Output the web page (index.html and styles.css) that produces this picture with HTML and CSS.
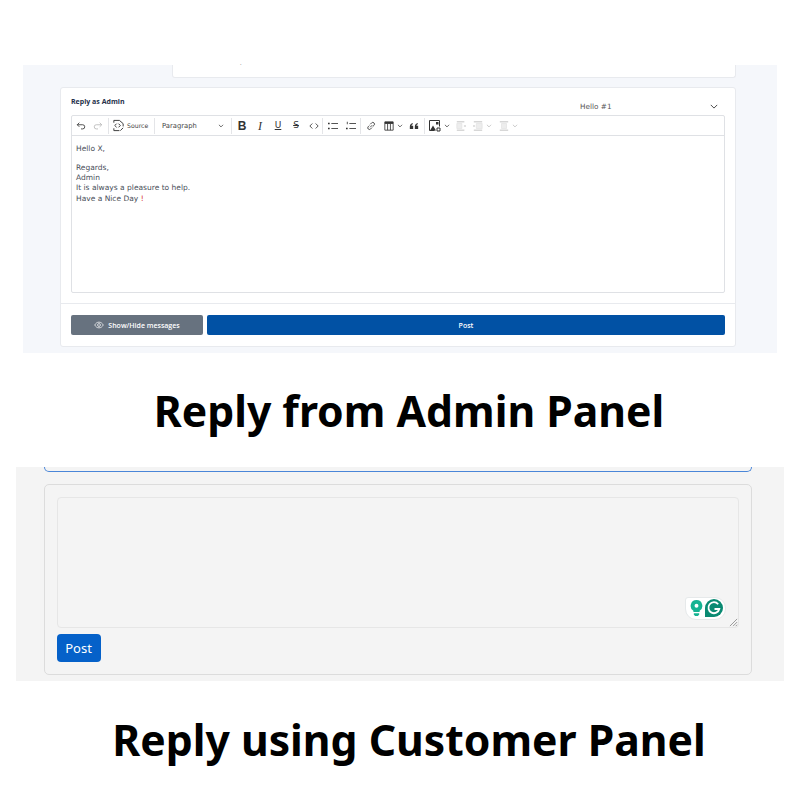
FILE: index.html
```html
<!DOCTYPE html>
<html lang="en">
<head>
    <meta charset="UTF-8">
    <title>Reply from Admin Panel / Customer Panel</title>
    <link rel="stylesheet" href="styles.css">
</head>
<body>

<!-- Admin panel screenshot -->
<section class="admin-panel">
    <div class="prev-message"><span class="prev-dot">.</span></div>

    <div class="reply-card">
        <div class="reply-body">
            <div class="reply-head">
                <span class="reply-title">Reply as Admin</span>
                <div class="template-select">
                    <span>Hello #1</span>
                    <svg class="chev-lg" viewBox="0 0 10 6"><path d="M1 1l4 4 4-4"/></svg>
                </div>
            </div>

            <div class="editor">
                <div class="toolbar">
                    <div class="tool-group history">
                        <svg class="ico" viewBox="0 0 12 12"><path d="M4 2L1.500 4.500 4 7M1.500 4.500H8a2.500 2.500 0 0 1 0 5H6"/></svg>
                        <svg class="ico off" viewBox="0 0 12 12"><path d="M8 2l2.500 2.500L8 7M10.500 4.500H4a2.500 2.500 0 0 0 0 5h2"/></svg>
                    </div>
                    <div class="tool-group source">
                        <svg class="ico ico-src" viewBox="0 0 14 14"><path d="M2 4V1.500h6L12 5v3M2 10v2.500h6M9 12.500l3-3M5 5L3 7l2 2M7 5l2 2-2 2"/></svg>
                        <span class="tool-text">Source</span>
                    </div>
                    <div class="tool-group para">
                        <span class="tool-text para-text">Paragraph</span>
                        <svg class="chev" viewBox="0 0 10 6"><path d="M1.500 1l3.500 3.500L8.500 1"/></svg>
                    </div>
                    <div class="tool-group fmt">
                        <span class="fmt-b">B</span>
                        <span class="fmt-i">I</span>
                        <span class="fmt-u">U</span>
                        <span class="fmt-s">S</span>
                        <svg class="ico" viewBox="0 0 12 12"><path d="M4 3L1 6l3 3M8 3l3 3-3 3"/></svg>
                    </div>
                    <div class="tool-group lists">
                        <svg class="ico" viewBox="0 0 12 12"><path d="M4 3h8M4 9h8"/><path class="dots" d="M0 2h2v2H0zM0 8h2v2H0z"/></svg>
                        <svg class="ico" viewBox="0 0 12 12"><path d="M4 3h8M4 9h8"/><path class="dots" d="M1 1h1v3H1zM0 8h2v2H0z"/></svg>
                    </div>
                    <div class="tool-group insert">
                        <svg class="ico" viewBox="0 0 12 12"><path d="M5 7.500L7.500 5M4 5.500L2.500 7a2 2 0 0 0 2.800 2.800L7 8M5 4l1.700-1.700a2 2 0 0 1 2.900 2.900L8 6.800"/></svg>
                        <svg class="ico ico-table" viewBox="0 0 12 12"><path class="dots" d="M1 1h10v2.500H1z"/><path d="M1 1h10v10H1zM4.300 3v8M7.700 3v8"/></svg>
                        <svg class="chev" viewBox="0 0 10 6"><path d="M1.500 1l3.500 3.500L8.500 1"/></svg>
                        <svg class="ico ico-quote" viewBox="0 0 12 12"><path class="dots" d="M1 6.500C1 4.500 2.500 3 4.500 2.500v1.500C3.500 4.300 3 5 3 5.800h2V9.500H1zM7 6.500C7 4.500 8.500 3 10.500 2.500v1.500C9.500 4.300 9 5 9 5.800h2V9.500H7z"/></svg>
                    </div>
                    <div class="tool-group images">
                        <svg class="ico ico-img" viewBox="0 0 12 12"><path d="M.5.500h10v6"/><path d="M.5.500v10h5"/><path class="dots" d="M1 10.500L4 5.500l3 5zM7 2h2.500v2.500H7z"/><path d="M8 8h3v3H8z"/></svg>
                        <svg class="chev" viewBox="0 0 10 6"><path d="M1.500 1l3.500 3.500L8.500 1"/></svg>
                        <svg class="ico off" viewBox="0 0 12 12"><path class="faint" d="M1 3h6v6H1z"/><path d="M1 1h9M1 11h9M9.500 6H12"/></svg>
                        <svg class="ico off gap-l" viewBox="0 0 12 12"><path class="faint" d="M4 3h7v6H4z"/><path d="M1 1h10M1 11h10M0 6h2.500"/></svg>
                        <svg class="chev off" viewBox="0 0 10 6"><path d="M1.500 1l3.500 3.500L8.500 1"/></svg>
                        <svg class="ico off gap-l" viewBox="0 0 12 12"><path class="faint" d="M3 3h6v6H3z"/><path d="M1 1h10M1 11h10"/></svg>
                        <svg class="chev off" viewBox="0 0 10 6"><path d="M1.500 1l3.500 3.500L8.500 1"/></svg>
                    </div>
                </div>
                <div class="editor-text">
                    <p>Hello X,</p>
                    <p>Regards,<br>Admin<br>It is always a pleasure to help.<br>Have a Nice Day <span class="bang">!</span></p>
                </div>
            </div>
        </div>

        <div class="reply-foot">
            <button class="btn-show">
                <svg class="ico-eye" viewBox="0 0 14 10"><path d="M1 5c1.500-2.600 3.500-4 6-4s4.500 1.400 6 4c-1.500 2.600-3.500 4-6 4S2.500 7.600 1 5z"/><circle cx="7" cy="5" r="2"/></svg>
                Show/Hide messages
            </button>
            <button class="btn-post">Post</button>
        </div>
    </div>
</section>

<h1 class="caption caption-admin">Reply from Admin Panel</h1>

<!-- Customer panel screenshot -->
<section class="customer-panel">
    <div class="prev-box"></div>
    <div class="customer-card">
        <div class="fake-textarea">
            <div class="grammarly">
                <svg class="g-bulb" viewBox="0 0 14 18"><path d="M7 0a6.500 6.500 0 0 1 3.500 12v1.500h-7V12A6.500 6.500 0 0 1 7 0z"/><path d="M4 15h6v1.500L8.500 18h-3L4 16.500z"/><circle class="g-hole" cx="7" cy="6.500" r="2.200"/></svg>
                <svg class="g-logo" viewBox="0 0 18 18"><path class="g-bg" d="M9 0a9 9 0 0 1 0 18H0V9a9 9 0 0 1 9-9z"/><path class="g-mark" d="M13.200 5.200A5.500 5.500 0 1 0 14.300 10H9.500"/></svg>
            </div>
            <svg class="resize-grip" viewBox="0 0 10 10"><path d="M1 9l8-8M4.500 9L9 4.500M7.500 9L9 7.500"/></svg>
        </div>
        <button class="btn-customer">Post</button>
    </div>
</section>

<h1 class="caption caption-customer">Reply using Customer Panel</h1>

</body>
</html>
```

FILE: styles.css
```css
/* General styles */
body {
    font-family: "Open Sans", Arial, sans-serif;
    background-color: #fff;
    margin: 0;
    padding: 65px 0 0;
    height: 735px;
    overflow: hidden;
}

button {
    border: none;
    cursor: pointer;
}

/* Captions */
.caption {
    margin: 0;
    padding-left: 18px;
    font-family: "Noto Sans", sans-serif;
    font-weight: 700;
    font-size: 42.7px;
    line-height: 60px;
    color: #000;
    text-align: center;
}

.caption-admin {
    margin-top: 28px;
    height: 86px;
}

.caption-customer {
    margin-top: 29px;
}

/* Admin panel */
.admin-panel {
    margin: 0 23px;
    height: 288px;
    background-color: #f5f7fb;
    box-sizing: border-box;
    padding: 0 41px 0 37px;
}

.prev-message {
    margin-left: 112px;
    height: 13px;
    background-color: #fff;
    border: 1px solid #e8eaee;
    border-top: none;
    border-radius: 0 0 3px 3px;
    box-sizing: border-box;
    font-size: 6px;
    line-height: 1px;
    color: #555;
    padding-left: 67px;
}

.prev-dot {
    position: relative;
    top: -2px;
}

.reply-card {
    margin-top: 9px;
    height: 260px;
    background-color: #fff;
    border: 1px solid #e8eaee;
    border-radius: 3px;
    box-sizing: border-box;
    display: flex;
    flex-direction: column;
}

.reply-body {
    height: 216px;
    box-sizing: border-box;
    padding: 9px 10px 0;
    border-bottom: 1px solid #e8eaee;
}

.reply-head {
    display: flex;
    justify-content: space-between;
    height: 18px;
}

.reply-title {
    font-size: 7px;
    font-weight: 700;
    line-height: 10px;
    color: #25304a;
}

.template-select {
    width: 145px;
    display: flex;
    justify-content: space-between;
    align-items: center;
    height: 19px;
    box-sizing: border-box;
    padding-right: 7px;
    font-family: "DejaVu Sans", sans-serif;
    font-size: 7.3px;
    color: #555;
}

.chev-lg {
    width: 8px;
    height: 5px;
    fill: none;
    stroke: #444;
    stroke-width: 1.2;
}

/* Editor */
.editor {
    height: 178px;
    border: 1px solid #dfe1e5;
    border-radius: 2px;
    box-sizing: border-box;
}

.toolbar {
    height: 19px;
    border-bottom: 1px solid #dfe1e5;
    display: flex;
    align-items: center;
    font-family: "DejaVu Sans", sans-serif;
}

.tool-group {
    height: 16px;
    box-sizing: border-box;
    flex: none;
    display: flex;
    align-items: center;
    gap: 8px;
    padding: 0 5px;
    border-right: 1px solid #e4e5e8;
}

.tool-group:last-child {
    border-right: none;
}

.tool-text {
    font-size: 6.2px;
    color: #444;
}

.para-text {
    font-size: 6.8px;
}

.ico {
    width: 10px;
    height: 10px;
    fill: none;
    stroke: #333;
    stroke-width: 1;
    flex: none;
}

.ico.off,
.chev.off {
    opacity: 0.35;
}

.ico-src {
    width: 13px;
    height: 13px;
}

.dots {
    fill: #333;
    stroke: none;
}

.faint {
    fill: #ccc;
    stroke: #aaa;
    stroke-width: 0.8;
}

.chev {
    width: 6px;
    height: 4px;
    fill: none;
    stroke: #333;
    stroke-width: 1.2;
    flex: none;
}

.history {
    width: 37px;
    gap: 7px;
    padding: 0 0 0 4px;
}

.source {
    width: 46px;
    gap: 2px;
    padding: 0 0 0 3px;
}

.para {
    width: 77px;
    justify-content: space-between;
    padding: 0 7px;
}

.fmt {
    width: 91px;
    padding: 0 0 0 5px;
    font-size: 12px;
    color: #333;
    line-height: 1;
}

.fmt span {
    width: 10px;
    flex: none;
    text-align: center;
}

.fmt-b {
    font-family: "Liberation Sans", sans-serif;
    font-weight: 700;
}

.fmt-i {
    font-family: "Liberation Serif", serif;
    font-style: italic;
}

.fmt-u {
    text-decoration: underline;
    font-size: 9px;
}

.fmt-s {
    text-decoration: line-through;
    font-size: 9px;
}

.lists {
    width: 38px;
}

.insert {
    width: 64px;
}

.insert .chev {
    margin: 0 -2px 0 -5px;
}

.images {
    gap: 6px;
    padding: 0 0 0 4px;
}

.ico-img {
    width: 12px;
    height: 12px;
}

.images .chev {
    margin-left: -3px;
}

.gap-l {
    margin-left: 1px;
}

.editor-text {
    padding: 8px 4px;
    font-family: "DejaVu Sans", sans-serif;
    font-size: 7.5px;
    line-height: 10.3px;
    color: #4a4f5a;
}

.editor-text p {
    margin: 0 0 8.5px;
}

.bang {
    color: #d9342b;
}

.reply-foot {
    display: flex;
    gap: 4px;
    padding: 11px 10px 0;
}

.btn-show,
.btn-post {
    height: 20px;
    border-radius: 2px;
    color: #fff;
    font-family: "Open Sans", sans-serif;
    font-size: 7px;
    font-weight: 600;
    display: flex;
    align-items: center;
    justify-content: center;
    padding: 0;
}

.btn-show {
    width: 132px;
    flex: none;
    gap: 4px;
    background-color: #67727f;
}

.btn-post {
    flex: 1;
    background-color: #0151a4;
}

.ico-eye {
    width: 10px;
    height: 8px;
    fill: none;
    stroke: #fff;
    stroke-width: 1;
}

/* Customer panel */
.customer-panel {
    margin: 0 16px;
    height: 214px;
    background-color: #f4f4f4;
    padding: 0 32px 0 28px;
    box-sizing: border-box;
}

.prev-box {
    height: 5px;
    border: 1px solid #4a86d8;
    border-top: none;
    border-radius: 0 0 5px 5px;
    box-sizing: border-box;
}

.customer-card {
    margin-top: 12px;
    height: 191px;
    border: 1.5px solid #dcdcdc;
    border-radius: 5px;
    box-sizing: border-box;
    padding: 11.5px 12px 0 11.5px;
}

.fake-textarea {
    position: relative;
    height: 131px;
    border: 1px solid #e6e6e6;
    border-radius: 4px;
    box-sizing: border-box;
}

.grammarly {
    position: absolute;
    right: 12px;
    bottom: 7px;
    width: 41px;
    height: 23px;
    box-sizing: border-box;
    background-color: #fff;
    border: 1px solid #e6e9ea;
    border-radius: 3px 11px 11px 11px;
    display: flex;
    align-items: center;
    justify-content: space-between;
    padding: 0 2px 0 4px;
}

.g-bulb {
    width: 13px;
    height: 16px;
    fill: #15b392;
}

.g-hole {
    fill: #fff;
}

.g-logo {
    width: 18px;
    height: 18px;
}

.g-bg {
    fill: #0a8a72;
}

.g-mark {
    fill: none;
    stroke: #fff;
    stroke-width: 1.8;
}

.resize-grip {
    position: absolute;
    right: 0;
    bottom: 0;
    width: 9px;
    height: 9px;
    fill: none;
    stroke: #777;
    stroke-width: 0.8;
}

.btn-customer {
    display: block;
    margin-top: 6px;
    width: 44px;
    height: 28px;
    background-color: #0561c9;
    color: #fff;
    border-radius: 4px;
    font-family: "Noto Sans", sans-serif;
    font-size: 13px;
    padding: 0;
}
```
